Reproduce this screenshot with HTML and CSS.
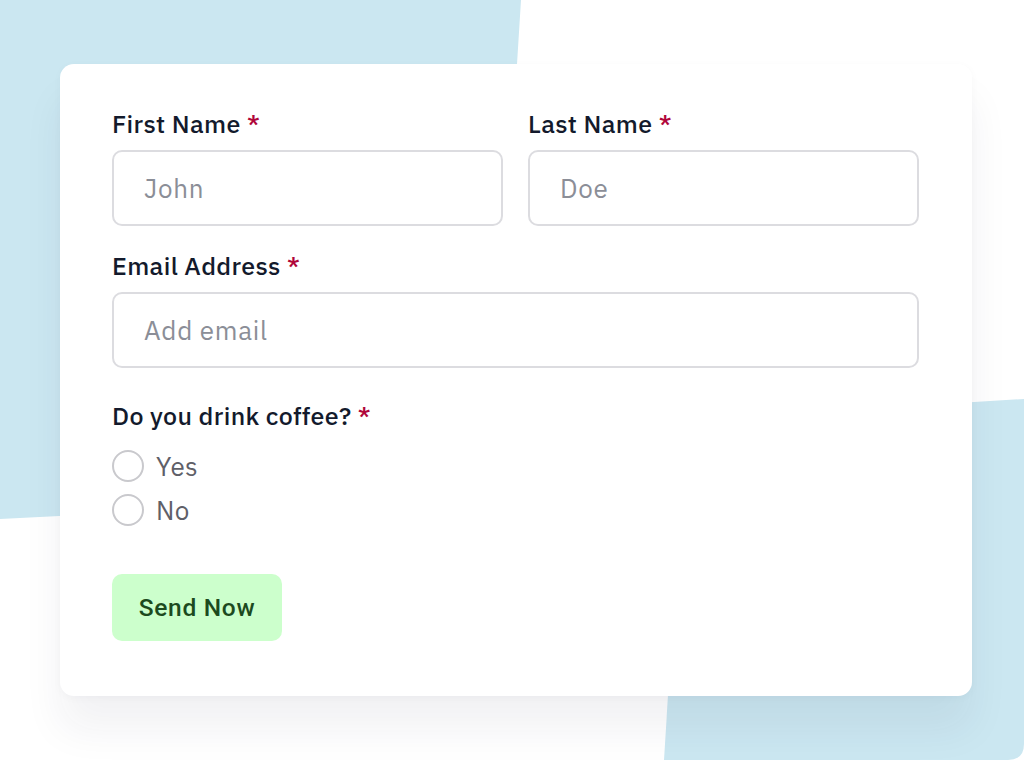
FILE: index.html
```html
<!DOCTYPE html>
<html lang="en">
<head>
<meta charset="utf-8">
<title>Coffee form</title>
<link rel="stylesheet" href="styles.css">
</head>
<body>
<svg class="blobs" width="1024" height="776" viewBox="0 0 1024 776" aria-hidden="true">
  <path class="blob" d="M0 0 H521 L491 480 Q490 494 476 495 L0 519 Z"/>
  <path class="blob" d="M685 420 L1024 399 V744 Q1024 760 1008 760 H664 Z"/>
</svg>
<main class="page">
  <form class="card">
    <div class="row">
      <div class="field">
        <label class="label">First Name <span class="req">*</span></label>
        <input class="input" type="text" placeholder="John">
      </div>
      <div class="field">
        <label class="label">Last Name <span class="req">*</span></label>
        <input class="input" type="text" placeholder="Doe">
      </div>
    </div>
    <div class="field">
      <label class="label">Email Address <span class="req">*</span></label>
      <input class="input" type="email" placeholder="Add email">
    </div>
    <div class="question">
      <div class="label">Do you drink coffee? <span class="req">*</span></div>
      <div class="options">
        <label class="option"><input class="radio" type="radio" name="coffee"><span>Yes</span></label>
        <label class="option"><input class="radio" type="radio" name="coffee"><span>No</span></label>
      </div>
    </div>
    <div class="actions">
      <button class="btn" type="button">Send Now</button>
    </div>
  </form>
</main>
</body>
</html>
```

FILE: styles.css
```css
* { box-sizing: border-box; }
html, body { margin: 0; padding: 0; }
body {
  width: 1024px;
  height: 776px;
  overflow: hidden;
  background: #ffffff;
  font-family: "IBM Plex Sans", Inter, "Noto Sans", sans-serif;
  position: relative;
}
.blobs {
  position: absolute;
  left: 0;
  top: 0;
}
.blob { fill: #cbe7f1; }
.page {
  position: relative;
  padding: 64px 0 0 60px;
}
.card {
  width: 912px;
  height: 632px;
  background: #ffffff;
  border-radius: 14px;
  box-shadow: 0 34px 40px rgba(30, 40, 60, 0.06), 0 2px 8px rgba(30, 40, 60, 0.03);
  padding: 45px 53px 0 52px;
  display: flex;
  flex-direction: column;
}
.row {
  display: grid;
  grid-template-columns: minmax(0, 1fr) minmax(0, 1fr);
  gap: 25px;
  margin-bottom: 25px;
}
.field {
  display: flex;
  flex-direction: column;
  min-width: 0;
}
.label {
  font-size: 25px;
  line-height: 30px;
  font-weight: 500;
  color: #131a2c;
  margin-bottom: 11px;
  letter-spacing: 0.35px;
}
.req { color: #b0063a; }
.input {
  width: 100%;
  min-width: 0;
  height: 76px;
  border: 2px solid #dcdce0;
  border-radius: 10px;
  padding: 0 30px;
  font-family: inherit;
  font-size: 26px;
  letter-spacing: 0.7px;
  color: #131a2c;
  background: #fff;
  outline: none;
}
.input::placeholder { color: #8b8e97; }
.question {
  margin-top: 33px;
}
.question .label { margin-bottom: 19px; }
.options {
  display: flex;
  flex-direction: column;
  gap: 12px;
}
.option {
  display: flex;
  align-items: center;
  gap: 12px;
  height: 32px;
  font-size: 26px;
  letter-spacing: 0.3px;
  color: #5f6068;
}
.radio {
  appearance: none;
  -webkit-appearance: none;
  margin: 0;
  width: 32px;
  height: 32px;
  border: 2px solid #c9c9cd;
  border-radius: 50%;
  background: #fff;
}
.actions {
  margin-top: 48px;
}
.btn {
  width: 170px;
  height: 67px;
  border: none;
  border-radius: 10px;
  background: #ccffcc;
  color: #1c4a1e;
  font-family: Roboto, "Liberation Sans", sans-serif;
  font-weight: 500;
  font-size: 24.5px;
  letter-spacing: 0.7px;
  cursor: pointer;
}
```
